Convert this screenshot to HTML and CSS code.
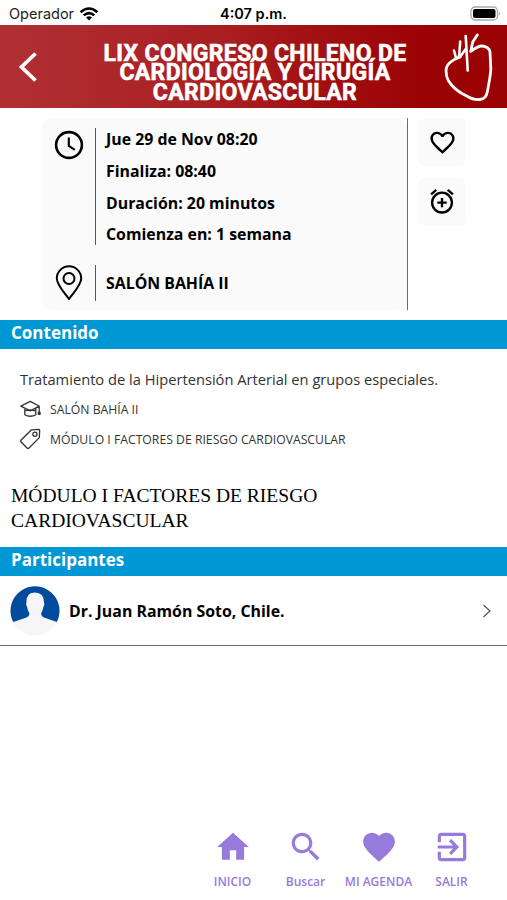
FILE: index.html
```html
<!DOCTYPE html>
<html lang="es">
<head>
    <meta charset="UTF-8">
    <meta name="viewport" content="width=device-width, initial-scale=1.0">
    <title>Detalle de actividad</title>
    <link rel="stylesheet" href="styles.css">
</head>
<body>
    <div class="status-bar">
        <div class="carrier">
            <span>Operador</span>
            <svg width="20" height="14" viewBox="0 0 20 14" fill="none" stroke="#000" stroke-width="2.5">
                <path d="M1.6 5.2Q10-2.2 18.4 5.2M4.7 8.4Q10 3.8 15.3 8.4"/>
                <path d="M7 10.4Q10 8 13 10.4L10 13.4z" fill="#000" stroke="none"/>
            </svg>
        </div>
        <span class="time">4:07 p.m.</span>
        <svg class="battery" width="31" height="16" viewBox="0 0 31 16">
            <rect x="1" y="1" width="26.5" height="13" rx="4" fill="#fff" stroke="#aaa" stroke-width="1.3"/>
            <rect x="3" y="3" width="22.5" height="9" rx="2" fill="#000"/>
            <path d="M28.8 5.2Q31 7.5 28.8 9.8z" fill="#aaa"/>
        </svg>
    </div>

    <header class="header">
        <a class="back">
            <svg width="20" height="32" viewBox="0 0 20 32" fill="none" stroke="#fff" stroke-width="3.8">
                <path d="M17.5 2.5L3.5 16l14 13.5"/>
            </svg>
        </a>
        <h1>
            <span>LIX CONGRESO CHILENO DE</span>
            <span>CARDIOLOGÍA Y CIRUGÍA</span>
            <span>CARDIOVASCULAR</span>
        </h1>
        <svg class="logo" width="52" height="72" viewBox="0 0 52 72" fill="none" stroke="#fff" stroke-linecap="round" stroke-linejoin="round">
            <path stroke-width="2.8" d="M16 26C8 29 2 34 2 39.5c0 4 0 6 2.3 10 4 7 11 12 18.4 15.5 5 3 10 4 13.3 3.5 4-.5 6.500-3 7.300-7.500C45 52 46.500 45 46.800 38L46 21c-.3-4-5-6-8.300-6-4 0-7 2.500-11 5.500l2-9.500 4.600-7"/>
            <path stroke-width="2.6" d="M21.700 5l2 34.500M16.200 10.500L15 26M10 19.500l2 7.500 4-1 5.700-8"/>
        </svg>
    </header>

    <section class="summary">
        <div class="info">
            <div class="info-row">
                <svg width="30" height="30" viewBox="0 0 30 30" fill="none" stroke="#000" stroke-width="2.6">
                    <circle cx="15" cy="15" r="12.9"/>
                    <path d="M14.8 7.6V16l6 3.8" stroke-width="2.1"/>
                </svg>
                <div class="lines">
                    <p>Jue 29 de Nov 08:20</p>
                    <p>Finaliza: 08:40</p>
                    <p>Duración: 20 minutos</p>
                    <p>Comienza en: 1 semana</p>
                </div>
            </div>
            <div class="info-row place">
                <svg width="30" height="36" viewBox="0 0 30 36" fill="none" stroke="#000" stroke-width="2" stroke-linejoin="round">
                    <path d="M15 34C10 27 2.8 20 2.8 13.5a12.2 12.2 0 0 1 24.4 0C27.2 20 20 27 15 34z"/>
                    <circle cx="15" cy="13.5" r="5.5"/>
                </svg>
                <div class="lines">
                    <p>SALÓN BAHÍA II</p>
                </div>
            </div>
        </div>
        <div class="divider"></div>
        <div class="actions">
            <button>
                <svg width="29" height="29" viewBox="0 0 24 24">
                    <path d="M16.5 3c-1.74 0-3.41.81-4.5 2.09C10.91 3.81 9.24 3 7.5 3 4.42 3 2 5.42 2 8.5c0 3.78 3.4 6.86 8.55 11.54L12 21.35l1.45-1.32C18.6 15.36 22 12.28 22 8.5 22 5.42 19.58 3 16.5 3zm-4.4 15.55l-.1.1-.1-.1C7.14 14.24 4 11.39 4 8.5 4 6.5 5.5 5 7.5 5c1.54 0 3.04.99 3.57 2.36h1.87C13.46 5.99 14.96 5 16.5 5c2 0 3.5 1.5 3.5 3.5 0 2.89-3.14 5.74-7.9 10.05z"/>
                </svg>
            </button>
            <button>
                <svg width="28" height="28" viewBox="0 0 24 24" fill="none" stroke="#000" stroke-width="2">
                    <circle cx="12" cy="12.5" r="8.5"/>
                    <path d="M12 8.5v8M8 12.5h8M2.6 5.5l4.5-3.8M21.4 5.5l-4.5-3.8"/>
                </svg>
            </button>
        </div>
    </section>

    <h2 class="bar">Contenido</h2>
    <section class="content">
        <p class="topic">Tratamiento de la Hipertensión Arterial en grupos especiales.</p>
        <div class="meta">
            <svg width="21" height="20" viewBox="0 0 21 20" fill="none" stroke="#333" stroke-width="1.3" stroke-linejoin="round">
                <path d="M.8 7.2L10.3 2.4l9 4.8-9 4.7zM4.8 9.3v6.5c3 1.9 8 1.9 11 0V9.3M4.8 12q5.5-2 11 0M19.2 7.4v7"/>
                <path d="M18.4 13.2h1.6v2.2h-1.6z" fill="#333"/>
            </svg>
            <span>SALÓN BAHÍA II</span>
        </div>
        <div class="meta">
            <svg width="21" height="22" viewBox="0 0 21 22" fill="none" stroke="#333" stroke-width="1.3" stroke-linejoin="round">
                <path d="M11.5 1.8l7.2-.5q1 0 1 1l-.4 7.3L8.800 20.200q-.8.600-1.500 0L.9 13.800q-.6-.8 0-1.500z"/>
                <circle cx="14.9" cy="6.2" r="2.1"/>
            </svg>
            <span>MÓDULO I FACTORES DE RIESGO CARDIOVASCULAR</span>
        </div>
    </section>
    <p class="module">MÓDULO I FACTORES DE RIESGO<br>CARDIOVASCULAR</p>

    <h2 class="bar">Participantes</h2>
    <div class="participant">
        <svg width="50" height="50" viewBox="0 0 50 50">
            <circle cx="25" cy="25" r="24.5" fill="#f6f6f8"/>
            <path fill="#004b9b" d="M3.2 36A24.500 24.500 0 1 1 46.800 36L34 31.500q-3-1.500-3-4 2-3 2.500-7 1.500-2 .5-4Q34 6.500 25 6.500T16.500 16.500q-1 2 .5 4 .5 4 2.500 7 0 2.500-3 4z"/>
        </svg>
        <span class="name">Dr. Juan Ramón Soto, Chile.</span>
        <svg width="10" height="14" viewBox="0 0 10 14" fill="none" stroke="#555" stroke-width="1.2">
            <path d="M1.5 1L8 7l-6.5 6"/>
        </svg>
    </div>

    <nav class="tabs">
        <a class="tab">
            <svg width="38" height="38" viewBox="0 0 24 24"><path d="M10 20v-6h4v6h5v-8h3L12 3 2 12h3v8z"/></svg>
            <span>INICIO</span>
        </a>
        <a class="tab">
            <svg width="38" height="38" viewBox="0 0 24 24"><path d="M15.5 14h-.79l-.28-.27C15.41 12.59 16 11.11 16 9.5 16 5.91 13.09 3 9.5 3S3 5.91 3 9.5 5.91 16 9.5 16c1.61 0 3.09-.59 4.23-1.57l.27.28v.79l5 4.99L20.49 19l-4.99-5zm-6 0C7.01 14 5 11.99 5 9.5S7.01 5 9.5 5 14 7.01 14 9.5 11.99 14 9.5 14z"/></svg>
            <span>Buscar</span>
        </a>
        <a class="tab">
            <svg width="38" height="38" viewBox="0 0 24 24"><path d="M12 21.35l-1.45-1.32C5.4 15.36 2 12.28 2 8.5 2 5.42 4.42 3 7.5 3c1.74 0 3.41.81 4.5 2.09C13.09 3.81 14.76 3 16.5 3 19.58 3 22 5.42 22 8.5c0 3.78-3.4 6.86-8.55 11.54L12 21.35z"/></svg>
            <span>MI AGENDA</span>
        </a>
        <a class="tab">
            <svg width="38" height="38" viewBox="0 0 24 24"><path d="M10.09 15.59L11.5 17l5-5-5-5-1.41 1.41L12.67 11H3v2h9.67l-2.58 2.59zM19 3H5c-1.11 0-2 .9-2 2v4h2V5h14v14H5v-4H3v4c0 1.1.89 2 2 2h14c1.1 0 2-.9 2-2V5c0-1.1-.9-2-2-2z"/></svg>
            <span>SALIR</span>
        </a>
    </nav>
</body>
</html>
```
FILE: styles.css
```css
* {
    margin: 0;
    padding: 0;
    box-sizing: border-box;
}

body {
    width: 507px;
    height: 900px;
    display: flex;
    flex-direction: column;
    overflow: hidden;
    background: #fff;
    color: #000;
    font-family: 'Open Sans', 'Noto Sans', sans-serif;
}

svg {
    display: block;
    flex-shrink: 0;
}

/* Status bar */
.status-bar {
    height: 25px;
    flex-shrink: 0;
    display: grid;
    grid-template-columns: 1fr auto 1fr;
    align-items: center;
    padding: 2px 6px 0 9px;
    font: 14.5px/20px Inter, sans-serif;
}

.carrier {
    display: flex;
    align-items: center;
    gap: 5px;
    color: #222;
}

.time {
    padding-right: 3px;
    font-weight: 600;
}

.battery {
    justify-self: end;
}

/* Header */
.header {
    height: 83px;
    flex-shrink: 0;
    display: flex;
    align-items: center;
    justify-content: space-between;
    padding: 0 11px 0 18px;
    background: linear-gradient(90deg, #b03034, #a91e20 45%, #a21012 62%, #9b0204 85%);
}

.header h1 {
    display: flex;
    flex-direction: column;
    align-items: center;
    padding: 13px 0 0 28px;
    color: #fff;
    font: 700 23px/19.5px Roboto, sans-serif;
    letter-spacing: 0.35px;
    white-space: nowrap;
    -webkit-text-stroke: 0.6px #fff;
}

/* Date and place */
.summary {
    height: 212px;
    flex-shrink: 0;
    display: flex;
    padding: 10px 0 10px 42px;
}

.info {
    width: 365px;
    padding: 10px 0 0 12px;
    background: #fafafa;
    border-radius: 10px;
}

.divider {
    width: 1px;
    background: #c4434b;
}

.info-row {
    display: flex;
    align-items: flex-start;
    gap: 11px;
}

.info-row > svg {
    margin-top: 2px;
}

.lines {
    height: 117px;
    padding: 0 0 0 10px;
    border-left: 1px solid #555;
    font-size: 15.87px;
    font-weight: 700;
    line-height: 31.8px;
}

.lines p:first-child {
    margin-top: -4px;
}

.place {
    margin-top: 20px;
}

.place > svg {
    margin-top: 0;
}

.place .lines {
    height: 36px;
}

.place .lines p {
    margin-top: 3px;
}

.actions {
    display: flex;
    flex-direction: column;
    gap: 12px;
    margin-left: 10px;
}

.actions button {
    width: 48px;
    height: 48px;
    display: flex;
    align-items: center;
    justify-content: center;
    background: #fafafa;
    border: none;
    border-radius: 7px;
}

/* Section bars */
.bar {
    height: 29px;
    flex-shrink: 0;
    padding-left: 11px;
    background: #0098d4;
    color: #fff;
    font-size: 17px;
    font-weight: 700;
    line-height: 25px;
}

.content {
    padding: 15px 20px 0;
    color: #333;
}

.topic {
    font-size: 14.68px;
    line-height: 30px;
}

.meta {
    height: 30px;
    display: flex;
    align-items: center;
    gap: 9px;
    font-size: 12.22px;
}

.module {
    padding: 30px 11px 14px;
    font: 19.55px/24.5px 'Liberation Serif', serif;
}

/* Participants */
.participant {
    height: 70px;
    flex-shrink: 0;
    display: flex;
    align-items: center;
    gap: 9px;
    padding: 0 15px 0 10px;
    border-bottom: 1px solid #666;
    font-size: 15.88px;
    font-weight: 700;
}

.name {
    flex: 1;
}

/* Bottom navigation */
.tabs {
    margin-top: auto;
    display: grid;
    grid-template-columns: 73px 73px 73px 73px;
    justify-content: end;
    padding: 0 19px 10px 0;
    color: #967adc;
}

.tab {
    display: flex;
    flex-direction: column;
    align-items: center;
    gap: 8px;
    font-size: 12px;
    font-weight: 600;
    line-height: 16px;
    white-space: nowrap;
}

.tab svg {
    fill: #967adc;
}
```
